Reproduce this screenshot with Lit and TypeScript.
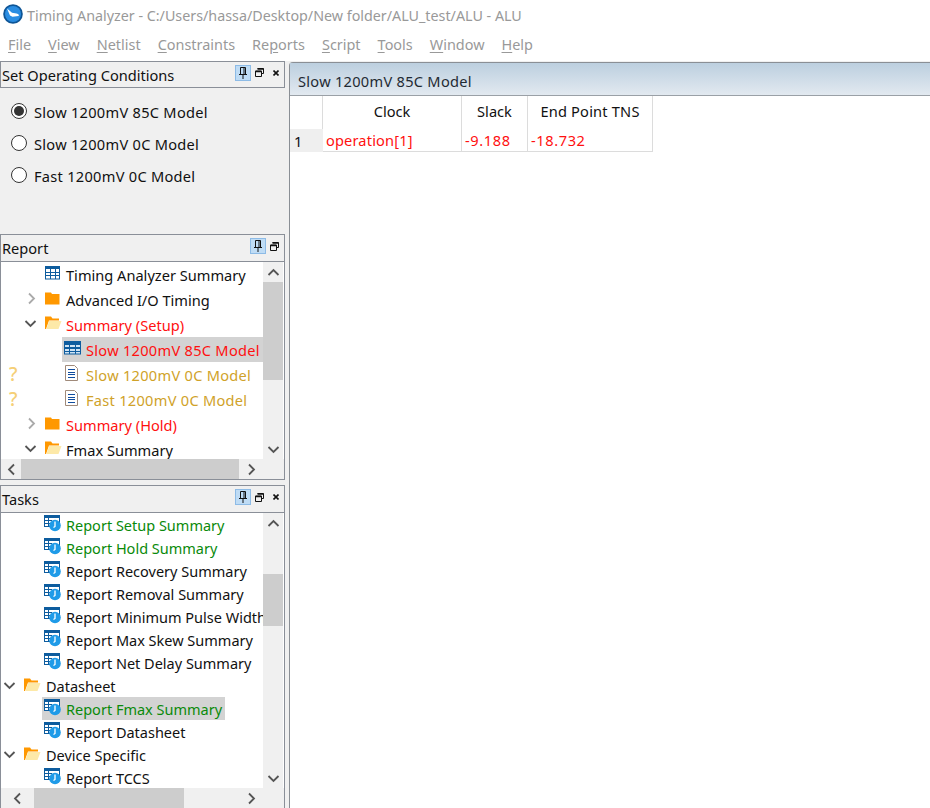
import { LitElement, html, css, svg } from "lit";
import { customElement } from "lit/decorators.js";

const logo = html`<svg class="logo" width="20" height="20" viewBox="0 0 20 20"><circle cx="10" cy="10" r="9.8" fill="#0e5596"/><circle cx="10" cy="10" r="8" fill="#2a8de2"/><path d="M4 4.5 L9 8.8 L13.5 9.4 Q17 10.4 15.5 12 L9.5 12.8 L7 11.4 Z" fill="#fff"/></svg>`;
const pin = html`<svg class="ic" width="16" height="16" viewBox="0 0 16 16"><rect x=".5" y=".5" width="15" height="15" fill="#bfdcf5" stroke="#8dbbe6"/><path d="M5.5 2.5h5v7h-5zM4 9.5h8M8 9.5V14" fill="none" stroke="#111"/><path d="M9 3v6" stroke="#111"/></svg>`;
const restore = html`<svg class="ic" width="9" height="9" viewBox="0 0 9 9"><path d="M2.5.5h6V5.5H6.5M.5 3H6.5V8.5H.5Z" fill="none" stroke="#111"/><path d="M2.5 1h6M.5 3.5h6" stroke="#111" stroke-width="1.4"/></svg>`;
const closeIc = html`<svg class="ic" width="6" height="6" viewBox="0 0 6 6"><path d="M.5.5L5.5 5.5M5.5.5L.5 5.5" stroke="#111" stroke-width="1.6"/></svg>`;
const closedF = html`<svg width="15" height="14" viewBox="0 0 15 14"><path d="M0 1.5h6l1 1.5h7.5V13.5H0Z" fill="#ff9800"/></svg>`;
const openF = html`<svg width="17" height="14" viewBox="0 0 17 14"><path d="M0 .5h6l1.5 2H14v2H4L1 13H0Z" fill="#ff9800"/><path d="M4.2 5H16.5L13.5 13H1.4Z" fill="#fde9a8"/></svg>`;
const table1 = html`<svg width="15" height="14" viewBox="0 0 15 14"><rect x=".5" y=".5" width="14" height="12.5" fill="#fff" stroke="#0d5c9e"/><rect x="0" y="0" width="15" height="3" fill="#0d5c9e"/><path d="M0 6.5h15M0 9.5h15M5.5 3v10M10.5 3v10" stroke="#0d5c9e"/></svg>`;
const table2 = html`<svg width="17" height="14" viewBox="0 0 17 14"><rect x=".5" y=".5" width="16" height="12.5" fill="#cfe3f3" stroke="#0d5c9e"/><rect x="0" y="0" width="17" height="4" fill="#0d5c9e"/><rect x="0" y="6" width="17" height="2" fill="#0d5c9e"/><path d="M0 10.5h17M5.5 4v9M11.5 4v9" stroke="#0d5c9e"/></svg>`;
const doc = html`<svg width="13" height="16" viewBox="0 0 13 16"><path d="M.5.5h9l3 3v12H.5Z" fill="#fff" stroke="#a08a7a"/><path d="M3 4.5h7M3 7.5h7M3 9.5h7M3 12.5h7" stroke="#114d9e"/></svg>`;
const task = html`<svg width="17" height="17" viewBox="0 0 17 17"><rect x=".5" y=".5" width="15" height="11" fill="#fff" stroke="#0d5c9e"/><rect x="0" y="0" width="16" height="3" fill="#0d5c9e"/><path d="M0 5.5h8M0 8.5h7M4.5 3v8" stroke="#0d5c9e"/><circle cx="11" cy="10.5" r="5.8" fill="#1f9be8"/><path d="M11 6.5v5l-1.5 1" fill="none" stroke="#fff" stroke-width="1.3"/></svg>`;
const chev = (d: string) => {
  const p: Record<string, string> = {
    r: "M5 1.5l5 5-5 5", d: "M1.5 4l5 5 5-5", u: "M1.5 9l5-5 5 5", l: "M9 1.5l-5 5 5 5",
  };
  return svg`<path d=${p[d]} fill="none" stroke-width="1.8"/>`;
};
const arrow = (d: string, cls = "") => html`<svg class="chev ${cls}" width="13" height="13" viewBox="0 0 13 13">${chev(d)}</svg>`;

type Row = { exp?: string; icon: unknown; t: string; c?: string; sel?: boolean; q?: boolean; pad: number };

const report: Row[] = [
  { pad: 44, icon: table1, t: "Timing Analyzer Summary" },
  { pad: 44, exp: "r", icon: closedF, t: "Advanced I/O Timing" },
  { pad: 44, exp: "d", icon: openF, t: "Summary (Setup)", c: "red" },
  { pad: 64, icon: table2, t: "Slow 1200mV 85C Model", c: "red sp", sel: true },
  { pad: 64, q: true, icon: doc, t: "Slow 1200mV 0C Model", c: "gold sp" },
  { pad: 64, q: true, icon: doc, t: "Fast 1200mV 0C Model", c: "gold sp" },
  { pad: 44, exp: "r", icon: closedF, t: "Summary (Hold)", c: "red" },
  { pad: 44, exp: "d", icon: openF, t: "Fmax Summary" },
];
const tasks: Row[] = [
  { pad: 43, icon: task, t: "Report Setup Summary", c: "green" },
  { pad: 43, icon: task, t: "Report Hold Summary", c: "green" },
  { pad: 43, icon: task, t: "Report Recovery Summary" },
  { pad: 43, icon: task, t: "Report Removal Summary" },
  { pad: 43, icon: task, t: "Report Minimum Pulse Width" },
  { pad: 43, icon: task, t: "Report Max Skew Summary" },
  { pad: 43, icon: task, t: "Report Net Delay Summary" },
  { pad: 23, exp: "d", icon: openF, t: "Datasheet" },
  { pad: 43, icon: task, t: "Report Fmax Summary", c: "green", sel: true },
  { pad: 43, icon: task, t: "Report Datasheet" },
  { pad: 23, exp: "d", icon: openF, t: "Device Specific" },
  { pad: 43, icon: task, t: "Report TCCS" },
  { pad: 43, icon: task, t: "" },
];

@customElement("app-root")
export class AppRoot extends LitElement {
  static styles = css`
    :host { display: block; width: 930px; height: 808px; overflow: hidden; background: #f0f0f0;
      font-family: "Noto Sans", sans-serif; font-size: 14.6px; color: #111; }
    .title { height: 30px; background: #fff; display: flex; align-items: center; gap: 4px; padding-left: 3px; color: #999; font-size: 14.3px; }
    .logo { margin-top: -2px; }
    .menu { height: 31px; background: #fff; display: flex; gap: 17px; padding-left: 8px; align-items: center; color: #999; padding-bottom: 3px; box-sizing: border-box; font-size: 14.45px; }
    .menu u { text-underline-offset: 2px; }
    .main { display: flex; height: 747px; }
    .left { width: 285px; display: flex; flex-direction: column; flex: none; }
    .right { margin-left: 4px; flex: 1; border-left: 1px solid #8a8f95; background: #fff; border-top: 1px solid #8a8f95; border-top-left-radius: 4px; margin-top: 1px; min-width: 0; }
    .panel { border: 1px solid #8a8f98; box-sizing: border-box; display: flex; flex-direction: column; background: #f0f0f0; min-height: 0; }
    .p1 { height: 169px; flex: none; border: none; }
    .p1 .head { height: 27px; border: 1px solid #8a8f98; box-sizing: border-box; }
    .p2 { height: 246px; flex: none; margin-top: 4px; }
    .p3 { flex: 1; margin-top: 5px; border-bottom: none; }
    .head { height: 26px; flex: none; display: flex; align-items: center; padding: 0 0 0 1px; border-bottom: 1px solid #8a8f98; }
    .name { flex: 1; }
    .tools { display: flex; align-items: center; padding-right: 5px; margin-top: -4px; }
    .tools .ic:nth-child(2) { margin-left: 4px; }
    .tools .ic:nth-child(3) { margin-left: 9px; }
    .ic { display: block; }
    .radios { display: flex; flex-direction: column; gap: 10px; padding: 13px 0 0 11px; }
    .radio { display: flex; align-items: center; gap: 7px; height: 22px; }
    .dot { width: 16px; height: 16px; border: 1px solid #333; border-radius: 50%; box-sizing: border-box; background: #fff; display: flex; align-items: center; justify-content: center; margin-top: -2px; }
    .dot i { width: 10px; height: 10px; border-radius: 50%; background: #333; display: block; }
    .body { flex: 1; min-height: 0; display: flex; background: #fff; }
    .treeWrap { flex: 1; display: flex; flex-direction: column; min-height: 0; min-width: 0; }
    .mid { flex: 1; display: flex; min-height: 0; }
    .tree { flex: 1; min-width: 0; overflow: hidden; background: #fff; }
    .row { display: flex; align-items: center; white-space: nowrap; position: relative; }
    .r25 .row { height: 25px; }
    .r23 .row { height: 23px; }
    .r23 { font-size: 14.5px; }
    .r23 .lbl { margin-left: 1px; }
    .iconBox { width: 20px; height: 16px; display: flex; align-items: center; flex: none; margin-top: -3px; }
    .r23 .iconBox { margin-top: -2px; }
    .lbl { padding: 0 1px; }
    .sp { letter-spacing: 0.28px; }
    .selbox { display: flex; align-items: center; height: 100%; padding: 0 2px; margin-left: -2px; background: #d3d3d3; flex: none; }
    .r25 .selbox { margin-left: -3px; }
    .r25 .selbox .iconBox { width: 21px; }
    .red { color: #ff1010; } .gold { color: #d0a229; } .green { color: #0a8a0a; }
    .exp { position: absolute; top: 5px; }
    .q { position: absolute; left: 8px; top: -1px; color: #f5cf77; font-weight: 500; font-size: 19px; }
    .chev { display: block; stroke: #555; }
    .exp .chev.gray { stroke: #aaa; }
    .vbar { width: 20px; flex: none; background: #f0f0f0; display: flex; flex-direction: column; align-items: center; margin-right: 1px; }
    .vbar .thumb { width: 20px; background: #cdcdcd; flex: none; }
    .vbar .fill { flex: 1; }
    .btn { height: 20px; display: flex; align-items: center; justify-content: center; flex: none; width: 20px; }
    .hbar { height: 20px; flex: none; background: #f0f0f0; display: flex; align-items: center; }
    .hbar .thumb { height: 20px; background: #cdcdcd; flex: none; }
    .hbar .fill { flex: 1; }
    .tabHead { height: 33px; background: linear-gradient(#bccfdf, #e2e9f0); border-bottom: 1px solid #9aa0a6; display: flex; align-items: flex-end; padding: 0 0 4px 8px; box-sizing: border-box; color: #1f2a33; }
    .tabHead span { letter-spacing: 0.28px; }
    .grid { display: grid; grid-template-columns: 33px 139px 66px 125px; grid-template-rows: 33px 23px; width: 363px; }
    .cell { border-right: 1px solid #dcdcdc; border-bottom: 1px solid #dcdcdc; display: flex; align-items: center; padding-left: 3px; box-sizing: border-box; white-space: nowrap; }
    .cell.h { justify-content: center; padding: 0 0 3px; border-bottom: none; }
    .cell.wide { letter-spacing: 0.2px; }
    .cell.n { background: #efefef; border-right: none; border-bottom: none; padding-left: 4px; }
    .cell.blank { border-bottom: none; }
    .cell.op { letter-spacing: 0.15px; }
    .cell.num { letter-spacing: 0.6px; }
  `;

  private row(r: Row) {
    const inner = html`<span class="iconBox">${r.icon}</span><span class="lbl ${r.c ?? ""}">${r.t}</span>`;
    return html`<div class="row" style="padding-left:${r.pad}px">
      ${r.q ? html`<span class="q">?</span>` : ""}
      ${r.exp ? html`<span class="exp" style="left:${r.pad - 21}px">${arrow(r.exp, r.exp === "r" ? "gray" : "")}</span>` : ""}
      ${r.sel ? html`<span class="selbox">${inner}</span>` : inner}
    </div>`;
  }

  private head(name: string, close = true) {
    return html`<div class="head"><span class="name">${name}</span>
      <span class="tools">${pin}${restore}${close ? closeIc : ""}</span></div>`;
  }

  render() {
    const menus = [
      html`<span><u>F</u>ile</span>`, html`<span><u>V</u>iew</span>`, html`<span><u>N</u>etlist</span>`,
      html`<span><u>C</u>onstraints</span>`, html`<span>Re<u>p</u>orts</span>`, html`<span><u>S</u>cript</span>`,
      html`<span><u>T</u>ools</span>`, html`<span><u>W</u>indow</span>`, html`<span><u>H</u>elp</span>`,
    ];
    return html`
      <div class="title">${logo}<span>Timing Analyzer - C:/Users/hassa/Desktop/New folder/ALU_test/ALU - ALU</span></div>
      <div class="menu">${menus}</div>
      <div class="main">
        <div class="left">
          <div class="panel p1">
            ${this.head("Set Operating Conditions")}
            <div class="radios">
              <div class="radio"><span class="dot"><i></i></span><span class="sp">Slow 1200mV 85C Model</span></div>
              <div class="radio"><span class="dot"></span><span class="sp">Slow 1200mV 0C Model</span></div>
              <div class="radio"><span class="dot"></span><span class="sp">Fast 1200mV 0C Model</span></div>
            </div>
          </div>
          <div class="panel p2">
            ${this.head("Report", false)}
            <div class="body"><div class="treeWrap">
              <div class="mid">
                <div class="tree r25">${report.map((r) => this.row(r))}</div>
                <div class="vbar">
                  <div class="btn">${arrow("u")}</div>
                  <div class="thumb" style="height:98px"></div><div class="fill"></div>
                  <div class="btn">${arrow("d")}</div>
                </div>
              </div>
              <div class="hbar">
                <div class="btn">${arrow("l")}</div>
                <div class="thumb" style="width:218px"></div><div class="fill"></div>
                <div class="btn" style="margin-right:24px">${arrow("r")}</div>
              </div>
            </div></div>
          </div>
          <div class="panel p3">
            ${this.head("Tasks")}
            <div class="body"><div class="treeWrap">
              <div class="mid">
                <div class="tree r23">${tasks.map((r) => this.row(r))}</div>
                <div class="vbar">
                  <div class="btn">${arrow("u")}</div>
                  <div style="height:41px;flex:none"></div>
                  <div class="thumb" style="height:52px"></div><div class="fill"></div>
                  <div class="btn">${arrow("d")}</div>
                </div>
              </div>
              <div class="hbar">
                <div class="btn" style="width:33px">${arrow("l")}</div>
                <div class="thumb" style="width:150px"></div><div class="fill"></div>
                <div class="btn" style="margin-right:24px">${arrow("r")}</div>
              </div>
            </div></div>
          </div>
        </div>
        <div class="right">
          <div class="tabHead"><span>Slow 1200mV 85C Model</span></div>
          <div class="grid">
            <div class="cell h blank"></div><div class="cell h">Clock</div><div class="cell h">Slack</div><div class="cell h wide">End Point TNS</div>
            <div class="cell n">1</div><div class="cell red op">operation[1]</div><div class="cell red num">-9.188</div><div class="cell red num">-18.732</div>
          </div>
        </div>
      </div>`;
  }
}
